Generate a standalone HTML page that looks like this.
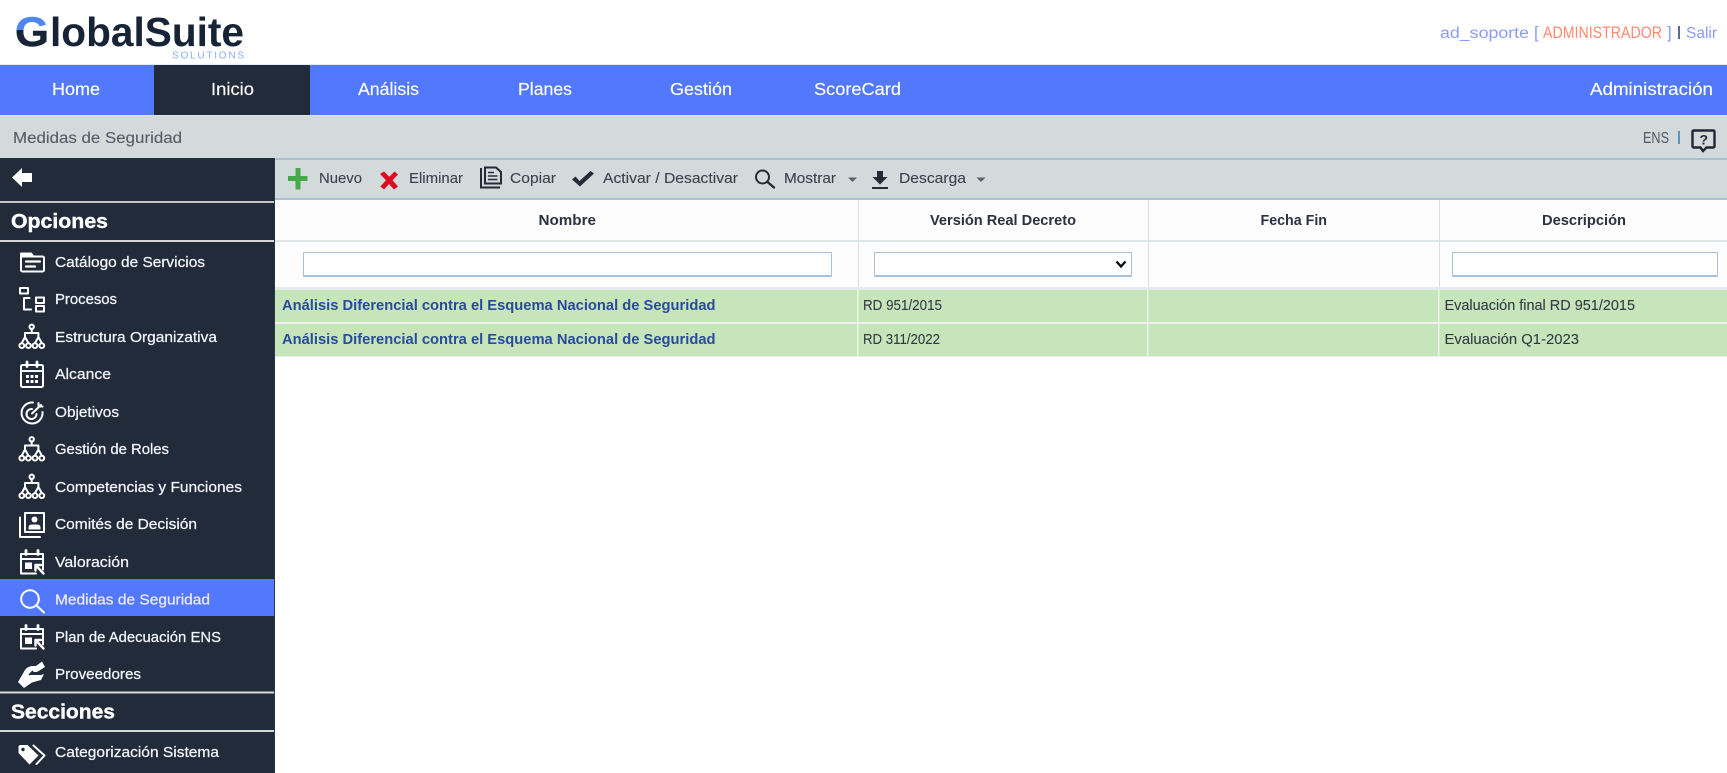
<!DOCTYPE html>
<html lang="es">
<head>
<meta charset="utf-8">
<title>GlobalSuite - Medidas de Seguridad</title>
<style>
html,body{margin:0;padding:0;width:1727px;height:773px;overflow:hidden;background:#fff}
svg#p{position:absolute;left:0;top:0;display:block;filter:blur(.3px)}
text{font-family:"Liberation Sans",sans-serif}
.nav{font-size:17.500px;fill:#fff;stroke:#fff;stroke-width:.15}
.tb{font-size:15px;fill:#3a4250;stroke:#3a4250;stroke-width:.12}
.th{font-size:14.500px;font-weight:bold;fill:#2b3140}
.lk{font-size:14.500px;font-weight:bold;fill:#2a4a9c}
.td{font-size:14.500px;fill:#333a44;stroke:#333a44;stroke-width:.1}
.si{font-size:15px;fill:#f2f5fa;stroke:#f2f5fa;stroke-width:.25}
.sh{font-size:20.500px;font-weight:bold;fill:#fff;stroke:#fff;stroke-width:.4}
.ic{fill:none;stroke:#fff;stroke-width:2;stroke-linecap:round;stroke-linejoin:round}
input,select{position:absolute;box-sizing:border-box;margin:0;padding:0;background:#fff;border:1px solid #a9c2dc;border-bottom-width:2px;border-radius:1px;outline:none}
select{appearance:none;-webkit-appearance:none}
</style>
</head>
<body>
<svg id="p" width="1727" height="773" viewBox="0 0 1727 773" xmlns="http://www.w3.org/2000/svg">
<defs>
<linearGradient id="g" x1="0" y1="0" x2="0" y2="1"><stop offset="0.47" stop-color="#4f86f5"/><stop offset="0.47" stop-color="#172436"/></linearGradient>
<g id="org" class="ic" stroke-width="2.200">
<circle cx="12.700" cy="2.800" r="2.200"/><path d="M12.700 5V9M6 13V9H19.400V13M6 13L2.800 19M6 13L9.400 19M19.400 13L16 19M19.400 13L22.800 19"/>
<circle cx="2.800" cy="21.600" r="2.400"/><circle cx="9.400" cy="21.600" r="2.400"/><circle cx="16" cy="21.600" r="2.400"/><circle cx="22.800" cy="21.600" r="2.400"/>
</g>
<g id="cal" class="ic" stroke-width="2.400">
<path d="M1 7.500V4.500H23V20"/><path d="M1 7.500V24H16"/><path d="M1 9.500H23"/><path d="M6 1V5M18 1V5" stroke-width="2.800"/>
<rect x="5" y="13" width="7" height="6.500" fill="#fff" stroke="none"/><path d="M15.500 15.500L23.500 24M15.500 15.500V21M15.500 15.500H21" stroke-width="2.400"/>
</g>
</defs>

<!-- header -->
<rect width="1727" height="65" fill="#fff"/>
<text x="15" y="46" font-size="42" font-weight="bold" fill="url(#g)" stroke="url(#g)" stroke-width=".5" textLength="34" lengthAdjust="spacingAndGlyphs">G</text>
<text x="50" y="46" font-size="41" font-weight="bold" fill="#172436" textLength="194" lengthAdjust="spacingAndGlyphs">lobalSuite</text>
<text x="172" y="58.500" font-size="10" fill="#8ab0f5" textLength="72" lengthAdjust="spacing">SOLUTIONS</text>
<g font-size="15.500">
<text x="1440" y="38" fill="#8a9cfb" textLength="89" lengthAdjust="spacingAndGlyphs">ad_soporte</text>
<text x="1534" y="38" fill="#8a9cfb" font-size="17">[</text>
<text x="1543" y="38" fill="#ff8a70" textLength="119" lengthAdjust="spacingAndGlyphs" font-size="16.500">ADMINISTRADOR</text>
<text x="1667" y="38" fill="#8a9cfb" font-size="17">]</text>
<rect x="1678" y="26" width="2" height="13" fill="#5a6a90"/>
<text x="1686" y="38" fill="#8a9cfb" textLength="31" lengthAdjust="spacingAndGlyphs">Salir</text>
</g>

<!-- nav -->
<rect y="64.500" width="1727" height="1" fill="#c8d4f5"/>
<rect y="65" width="1727" height="50" fill="#5278fe"/>
<rect x="154" y="65" width="156" height="50" fill="#212b39"/>
<text class="nav" x="52" y="95" textLength="48" lengthAdjust="spacingAndGlyphs">Home</text>
<text class="nav" x="211" y="95" textLength="43" lengthAdjust="spacingAndGlyphs">Inicio</text>
<text class="nav" x="358" y="95" textLength="61" lengthAdjust="spacingAndGlyphs">Análisis</text>
<text class="nav" x="518" y="95" textLength="54" lengthAdjust="spacingAndGlyphs">Planes</text>
<text class="nav" x="670" y="95" textLength="62" lengthAdjust="spacingAndGlyphs">Gestión</text>
<text class="nav" x="814" y="95" textLength="87" lengthAdjust="spacingAndGlyphs">ScoreCard</text>
<text class="nav" x="1590" y="95" textLength="123" lengthAdjust="spacingAndGlyphs">Administración</text>

<!-- breadcrumb -->
<rect y="115" width="1727" height="85" fill="#d2dadb"/>
<rect y="115" width="1727" height="1" fill="#dbe4ea"/>
<text x="13" y="143" font-size="15.500" fill="#565c68" stroke="#565c68" stroke-width=".12" textLength="169" lengthAdjust="spacingAndGlyphs">Medidas de Seguridad</text>
<text x="1643" y="143" font-size="15.500" fill="#4f5864" textLength="26" lengthAdjust="spacingAndGlyphs">ENS</text>
<rect x="1678" y="131" width="2" height="13" fill="#5f93b8"/>
<path d="M1694 130.500H1713Q1714.500 130.500 1714.500 132V146Q1714.500 147.500 1713 147.500H1706.500L1703 151L1700.500 147.500H1694Q1692.500 147.500 1692.500 146V132Q1692.500 130.500 1694 130.500Z" fill="none" stroke="#1f2733" stroke-width="2.400"/>
<text x="1699.500" y="144.500" font-size="14" font-weight="bold" fill="#1f2733">?</text>

<!-- toolbar -->
<rect x="275" y="158" width="1452" height="2" fill="#abc0d0"/>
<rect x="275" y="198" width="1452" height="2" fill="#a9c2d6"/>
<path d="M295.500 168H300.500V176H307.500V181H300.500V189.500H295.500V181H288V176H295.500Z" fill="#45a949"/>
<text class="tb" x="319" y="183" textLength="43" lengthAdjust="spacingAndGlyphs">Nuevo</text>
<path d="M380 174L384 171.500L389.300 176.800L394.500 171.500L398 174.500L392.500 180.300L398 186.500L394 189.500L389 184L384 189.500L380.300 186.500L386 180.300Z" fill="#dd0b1c"/>
<text class="tb" x="409" y="183" textLength="54" lengthAdjust="spacingAndGlyphs">Eliminar</text>
<g fill="none" stroke="#242c38" stroke-width="2">
<path d="M481 168V187.500H500"/><path d="M485 183.500V167.500H496L501 172V183.500Z"/><path d="M488 172.500H494M488 176H497.500M488 179.500H497.500" stroke-width="1.400"/>
</g>
<text class="tb" x="510" y="183" textLength="46" lengthAdjust="spacingAndGlyphs">Copiar</text>
<path d="M572 179.500L575.500 176.500L579.500 181L590.500 171L594 173.500L580 186.500Z" fill="#242c38"/>
<text class="tb" x="603" y="183" textLength="135" lengthAdjust="spacingAndGlyphs">Activar / Desactivar</text>
<circle cx="762.500" cy="177" r="6.500" fill="none" stroke="#242c38" stroke-width="2"/><path d="M767.500 182L774 187.500" stroke="#242c38" stroke-width="2.400" stroke-linecap="round"/>
<text class="tb" x="784" y="183" textLength="52" lengthAdjust="spacingAndGlyphs">Mostrar</text>
<path d="M848 177.500H857L852.500 182Z" fill="#5a6470"/>
<path d="M877 171H883V177H887.500L880 184.500L872.500 177H877Z" fill="#242c38"/><rect x="872" y="187" width="16" height="2" fill="#242c38"/>
<text class="tb" x="899" y="183" textLength="67" lengthAdjust="spacingAndGlyphs">Descarga</text>
<path d="M976.500 177.500H985.500L981 182Z" fill="#5a6470"/>

<!-- table -->
<rect x="275" y="200" width="1452" height="87" fill="#fdfdfd"/>
<rect x="275" y="240" width="1452" height="2" fill="#dfe6e8"/>
<rect x="275" y="287" width="1452" height="3" fill="#e6ebec"/>
<rect x="858" y="200" width="1" height="87" fill="#d8dfe2"/>
<rect x="1148" y="200" width="1" height="87" fill="#d8dfe2"/>
<rect x="1439" y="200" width="1" height="87" fill="#d8dfe2"/>
<text class="th" x="538.500" y="225" textLength="57.500" lengthAdjust="spacingAndGlyphs">Nombre</text>
<text class="th" x="930" y="225" textLength="146" lengthAdjust="spacingAndGlyphs">Versión Real Decreto</text>
<text class="th" x="1260.500" y="225" textLength="66.500" lengthAdjust="spacingAndGlyphs">Fecha Fin</text>
<text class="th" x="1542" y="225" textLength="84" lengthAdjust="spacingAndGlyphs">Descripción</text>

<rect x="275" y="290" width="1452" height="32" fill="#c7e5bb"/>
<rect x="275" y="324" width="1452" height="32" fill="#c7e5bb"/>
<rect x="275" y="356" width="1452" height="1" fill="#e8eee6"/>
<rect x="275" y="322" width="1452" height="2" fill="#eef2ee"/>
<rect x="857" y="290" width="1.500" height="66" fill="#eef4ea"/>
<rect x="1147" y="290" width="1.500" height="66" fill="#eef4ea"/>
<rect x="1438" y="290" width="1.500" height="66" fill="#eef4ea"/>
<text class="lk" x="282" y="310" textLength="433.500" lengthAdjust="spacingAndGlyphs">Análisis Diferencial contra el Esquema Nacional de Seguridad</text>
<text class="lk" x="282" y="344" textLength="433.500" lengthAdjust="spacingAndGlyphs">Análisis Diferencial contra el Esquema Nacional de Seguridad</text>
<text class="td" x="863" y="310" textLength="79" lengthAdjust="spacingAndGlyphs">RD 951/2015</text>
<text class="td" x="863" y="344" textLength="77" lengthAdjust="spacingAndGlyphs">RD 311/2022</text>
<text class="td" x="1444.500" y="310" textLength="190.500" lengthAdjust="spacingAndGlyphs">Evaluación final RD 951/2015</text>
<text class="td" x="1444.500" y="344" textLength="134.500" lengthAdjust="spacingAndGlyphs">Evaluación Q1-2023</text>

<!-- sidebar -->
<rect y="158" width="275" height="615" fill="#212b39"/>
<rect x="274" y="158" width="1" height="615" fill="#2c3644"/>
<path d="M12 177.500L22 168V173H32V182H22V187Z" fill="#fff"/>
<rect y="201" width="274" height="2" fill="#c3c7ca"/>
<text class="sh" x="11" y="228" textLength="97" lengthAdjust="spacingAndGlyphs">Opciones</text>
<rect y="240" width="274" height="2" fill="#d4d7da"/>
<rect y="579" width="274" height="37" fill="#5278fe"/>
<rect y="691.500" width="274" height="2" fill="#d4d7da"/>
<text class="sh" x="11" y="718.500" textLength="104" lengthAdjust="spacingAndGlyphs">Secciones</text>
<rect y="730" width="274" height="2" fill="#d4d7da"/>

<text class="si" x="55" y="267" textLength="150" lengthAdjust="spacingAndGlyphs">Catálogo de Servicios</text>
<text class="si" x="55" y="304" textLength="62" lengthAdjust="spacingAndGlyphs">Procesos</text>
<text class="si" x="55" y="342" textLength="162" lengthAdjust="spacingAndGlyphs">Estructura Organizativa</text>
<text class="si" x="55" y="379" textLength="56" lengthAdjust="spacingAndGlyphs">Alcance</text>
<text class="si" x="55" y="417" textLength="64" lengthAdjust="spacingAndGlyphs">Objetivos</text>
<text class="si" x="55" y="454" textLength="114" lengthAdjust="spacingAndGlyphs">Gestión de Roles</text>
<text class="si" x="55" y="492" textLength="187" lengthAdjust="spacingAndGlyphs">Competencias y Funciones</text>
<text class="si" x="55" y="529" textLength="142" lengthAdjust="spacingAndGlyphs">Comités de Decisión</text>
<text class="si" x="55" y="567" textLength="74" lengthAdjust="spacingAndGlyphs">Valoración</text>
<text class="si" x="55" y="604.500" textLength="155" lengthAdjust="spacingAndGlyphs" style="fill:#efe9ff;stroke:#efe9ff">Medidas de Seguridad</text>
<text class="si" x="55" y="642" textLength="166" lengthAdjust="spacingAndGlyphs">Plan de Adecuación ENS</text>
<text class="si" x="55" y="679" textLength="86" lengthAdjust="spacingAndGlyphs">Proveedores</text>
<text class="si" x="55" y="757" textLength="164" lengthAdjust="spacingAndGlyphs">Categorización Sistema</text>

<!-- icons -->
<g class="ic" stroke-width="2.600">
<rect x="21" y="256.500" width="23" height="15" rx="1.500"/><path d="M21 256.500V253.500H31L33.500 256.500" fill="#fff"/>
<path d="M26 261.500H40M26 266.500H35" stroke-width="2.200"/>
</g>
<g class="ic" stroke-width="2.200">
<rect x="20" y="288" width="8" height="5.500"/><rect x="36" y="297.500" width="8" height="5.500"/><rect x="36" y="306" width="8" height="5.500"/>
<path d="M29.500 298H24V309.500H31"/>
</g>
<use href="#org" x="19" y="324"/>
<g class="ic" stroke-width="2.600">
<rect x="21" y="365" width="22" height="22" rx="1.500"/><path d="M21 371H43"/><path d="M27 362V366.500M37 362V366.500" stroke-width="2.800"/>
</g>
<g fill="#fff"><rect x="26" y="375" width="3" height="3"/><rect x="30.500" y="375" width="3" height="3"/><rect x="35" y="375" width="3" height="3"/><rect x="26" y="380" width="3" height="3"/><rect x="30.500" y="380" width="3" height="3"/><rect x="35" y="380" width="3" height="3"/></g>
<g class="ic" stroke-width="2.800">
<path d="M33 402.500A10.500 10.500 0 1 0 42.500 412"/><path d="M32 409A5 5 0 1 0 36.500 414"/><path d="M32 413.500L41 405M38.500 403V406.500H42.500"/>
</g>
<use href="#org" x="19" y="436.500"/>
<use href="#org" x="19" y="474"/>
<g class="ic" stroke-width="2.400">
<rect x="25" y="513" width="19" height="19"/><path d="M20 517.500V537H40"/>
<circle cx="34.500" cy="519.500" r="3" fill="#fff" stroke="none"/><path d="M29 529V527.500Q29 525 32 525H37Q40 525 40 527.500V529Z" fill="#fff" stroke-width="1"/>
</g>
<use href="#cal" x="20" y="549.500"/>
<g class="ic" stroke-width="2.700"><circle cx="30" cy="599" r="8.800"/><path d="M36.500 605.500L44 612.500"/></g>
<use href="#cal" x="20" y="624.500"/>
<path d="M18 682L25 670Q28 666 33 666H36L42 661.500L45 667L37 672H31L29.500 675H41L44 674L41 680L32 682.500L24 688Z" fill="#fff"/>
<path d="M29 675L33 671" stroke="#212b39" stroke-width="1.500"/>
<path d="M18.500 747Q18.500 745 20.500 745H27.500L38.500 755.500L29.500 764.500L18.500 753Z" fill="#fff"/>
<circle cx="23" cy="749.500" r="1.700" fill="#212b39"/>
<path d="M33.500 745.500L44.500 755.500L36.500 764" class="ic" stroke-width="2.200"/>
</svg>

<input type="text" style="left:303px;top:252px;width:529px;height:25px">
<select style="left:874px;top:252px;width:258px;height:25px"><option></option></select>
<svg style="position:absolute;left:1115px;top:260px" width="12" height="9" viewBox="0 0 12 9"><path d="M1.500 1.500L6 6.500L10.500 1.500" fill="none" stroke="#111" stroke-width="2.400"/></svg>
<input type="text" style="left:1452px;top:252px;width:266px;height:25px">
</body>
</html>
